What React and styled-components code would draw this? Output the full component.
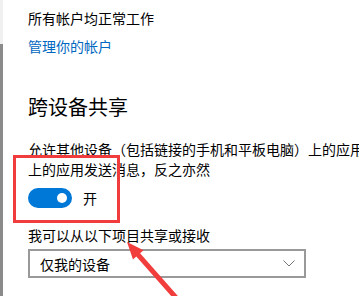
import React, { useState } from "react";
import styled, { createGlobalStyle } from "styled-components";

const GlobalStyle = createGlobalStyle`
  html, body {
    margin: 0;
    padding: 0;
    background: #fff;
    overflow: hidden;
  }
  body {
    font-family: "Noto Sans CJK SC", "Noto Sans", sans-serif;
    color: #000;
  }
`;

const Page = styled.div`
  position: relative;
  display: flex;
  width: 359px;
  height: 296px;
  overflow: hidden;
  background: #fff;
`;

const Scrollbar = styled.div`
  display: flex;
  flex-direction: column;
  width: 3px;
  flex-shrink: 0;
`;

const Track = styled.div`
  height: 44px;
  background: #f0f0f0;
`;

const Thumb = styled.div`
  flex: 1;
  background: #8a8a8a;
`;

const Content = styled.div`
  display: flex;
  flex-direction: column;
  padding-left: 25px;
  flex: 1;
  min-width: 0;
`;

const Text = styled.div`
  font-size: 14px;
  line-height: 20px;
  margin-top: ${({ $top }) => $top}px;
  white-space: nowrap;
`;

const Link = styled(Text)`
  color: #0067c0;
  cursor: pointer;
`;

const Heading = styled.h2`
  margin: 37px 0 0;
  font-size: 20px;
  line-height: 28px;
  font-weight: 400;
`;

const ToggleRow = styled.div`
  display: flex;
  align-items: center;
  gap: 11px;
  margin-top: 9px;
  height: 20px;
`;

const Switch = styled.button`
  display: flex;
  align-items: center;
  justify-content: ${({ $on }) => ($on ? "flex-end" : "flex-start")};
  width: 44px;
  height: 20px;
  padding: 0 5px;
  border: ${({ $on }) => ($on ? "none" : "2px solid #333")};
  border-radius: 10px;
  background: ${({ $on }) => ($on ? "#0078d7" : "#fff")};
  cursor: pointer;
  box-sizing: border-box;
`;

const Knob = styled.span`
  width: 10px;
  height: 10px;
  border-radius: 50%;
  background: ${({ $on }) => ($on ? "#fff" : "#333")};
`;

const ToggleLabel = styled.span`
  font-size: 14px;
  line-height: 20px;
`;

const Select = styled.div`
  display: flex;
  align-items: center;
  justify-content: space-between;
  box-sizing: border-box;
  width: 278px;
  height: 29px;
  margin-top: 4px;
  padding: 0 9px 0 10px;
  border: 2px solid #999;
  font-size: 14px;
`;

const Highlight = styled.div`
  position: absolute;
  left: 13px;
  top: 155px;
  width: 107px;
  height: 68px;
  box-sizing: border-box;
  border: 3px solid #f03c3c;
  pointer-events: none;
`;

const Overlay = styled.svg`
  position: absolute;
  left: 0;
  top: 0;
  pointer-events: none;
`;

export default function App() {
  const [on, setOn] = useState(true);

  return (
    <>
      <GlobalStyle />
      <Page>
        <Scrollbar>
          <Track />
          <Thumb />
        </Scrollbar>
        <Content>
          <Text $top={8}>所有帐户均正常工作</Text>
          <Link $top={8}>管理你的帐户</Link>
          <Heading>跨设备共享</Heading>
          <Text $top={18}>允许其他设备（包括链接的手机和平板电脑）上的应用打开此设备</Text>
          <Text $top={0}>上的应用发送消息，反之亦然</Text>
          <ToggleRow>
            <Switch $on={on} onClick={() => setOn(!on)}>
              <Knob $on={on} />
            </Switch>
            <ToggleLabel>{on ? "开" : "关"}</ToggleLabel>
          </ToggleRow>
          <Text $top={17}>我可以从以下项目共享或接收</Text>
          <Select>
            <span>仅我的设备</span>
            <svg width="12" height="7" viewBox="0 0 12 7">
              <path d="M0.5 0.5 L6 6 L11.5 0.5" fill="none" stroke="#777" strokeWidth="1" />
            </svg>
          </Select>
        </Content>
        <Highlight />
        <Overlay width="359" height="296" viewBox="0 0 359 296">
          <polygon
            fill="#f23d3d"
            points="127,242 143.5,250.2 140.1,253.2 179.9,298.3 176.1,301.6 136.3,256.5 133,259.4"
          />
        </Overlay>
      </Page>
    </>
  );
}
